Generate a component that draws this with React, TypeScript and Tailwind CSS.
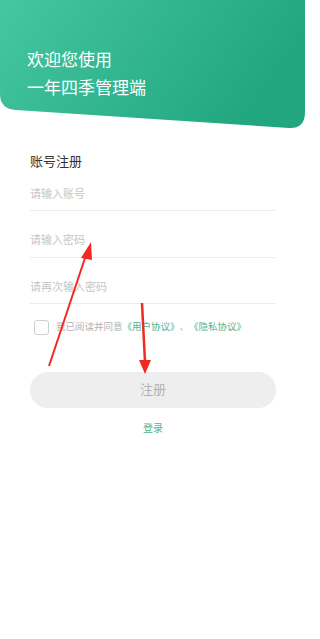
import { useState } from "react";

export default function App() {
  const [agree, setAgree] = useState(false);

  return (
    <div
      className="relative w-[320px] h-[639px] bg-white overflow-hidden"
      style={{ fontFamily: '"Noto Sans", "Noto Sans CJK SC", sans-serif' }}
    >
      <div className="relative h-[130px]">
        <svg className="absolute inset-0" width="320" height="130" viewBox="0 0 320 130">
          <defs>
            <linearGradient id="hdr" x1="0" y1="0" x2="1" y2="0.3">
              <stop offset="0" stopColor="#45c7a1" />
              <stop offset="1" stopColor="#21a680" />
            </linearGradient>
          </defs>
          <path
            d="M0,0 H305 V112 Q305,129 289,128 L16,110 Q0,109 0,94 Z"
            fill="url(#hdr)"
          />
        </svg>
        <div className="relative pt-[46px] pl-[27px] text-white text-[17px] leading-[28px]">
          <div>欢迎您使用</div>
          <div>一年四季管理端</div>
        </div>
      </div>

      <div className="mx-[30px] w-[246px]">
        <div className="mt-[22px] text-[13px] text-[#333] leading-[18px]">账号注册</div>

        <div className="flex flex-col">
          <input
            className="w-[246px] h-[41px] pt-[6px] border-b border-[#ececec] outline-none text-[11px] placeholder:text-[#c6c6c6]"
            placeholder="请输入账号"
          />
          <input
            type="password"
            className="w-[246px] h-[47px] pt-[11px] border-b border-[#ececec] outline-none text-[11px] placeholder:text-[#c6c6c6]"
            placeholder="请输入密码"
          />
          <input
            type="password"
            className="w-[246px] h-[46px] pt-[12px] border-b border-[#ececec] outline-none text-[11px] placeholder:text-[#c6c6c6]"
            placeholder="请再次输入密码"
          />
        </div>

        <div className="mt-[16px] flex items-center pl-[4px] text-[9.5px]">
          <button
            onClick={() => setAgree(!agree)}
            className="w-[15px] h-[15px] rounded-[3px] border border-[#cfcfcf] bg-white"
          />
          <span className="ml-[7px] text-[#b4b4b4]">我已阅读并同意</span>
          <span className="text-[#4db596]">《用户协议》</span>
          <span className="text-[#b4b4b4]">、</span>
          <span className="text-[#4db596]">《隐私协议》</span>
        </div>

        <button className="mt-[37px] w-[246px] h-[36px] rounded-full bg-[#eeeeee] text-[13px] text-[#b3b3b3]">
          注册
        </button>

        <div className="mt-[13px] text-center text-[10px] text-[#4db596]">登录</div>
      </div>

      <svg className="absolute inset-0 pointer-events-none" width="320" height="639">
        <line x1="49" y1="366" x2="86" y2="255" stroke="#f02a22" strokeWidth="2" />
        <polygon points="91,242 81,258 92,260" fill="#f02a22" />
        <line x1="142" y1="303" x2="145" y2="362" stroke="#f02a22" strokeWidth="2.5" />
        <polygon points="145,374 139,360 151,360" fill="#f02a22" />
      </svg>
    </div>
  );
}
